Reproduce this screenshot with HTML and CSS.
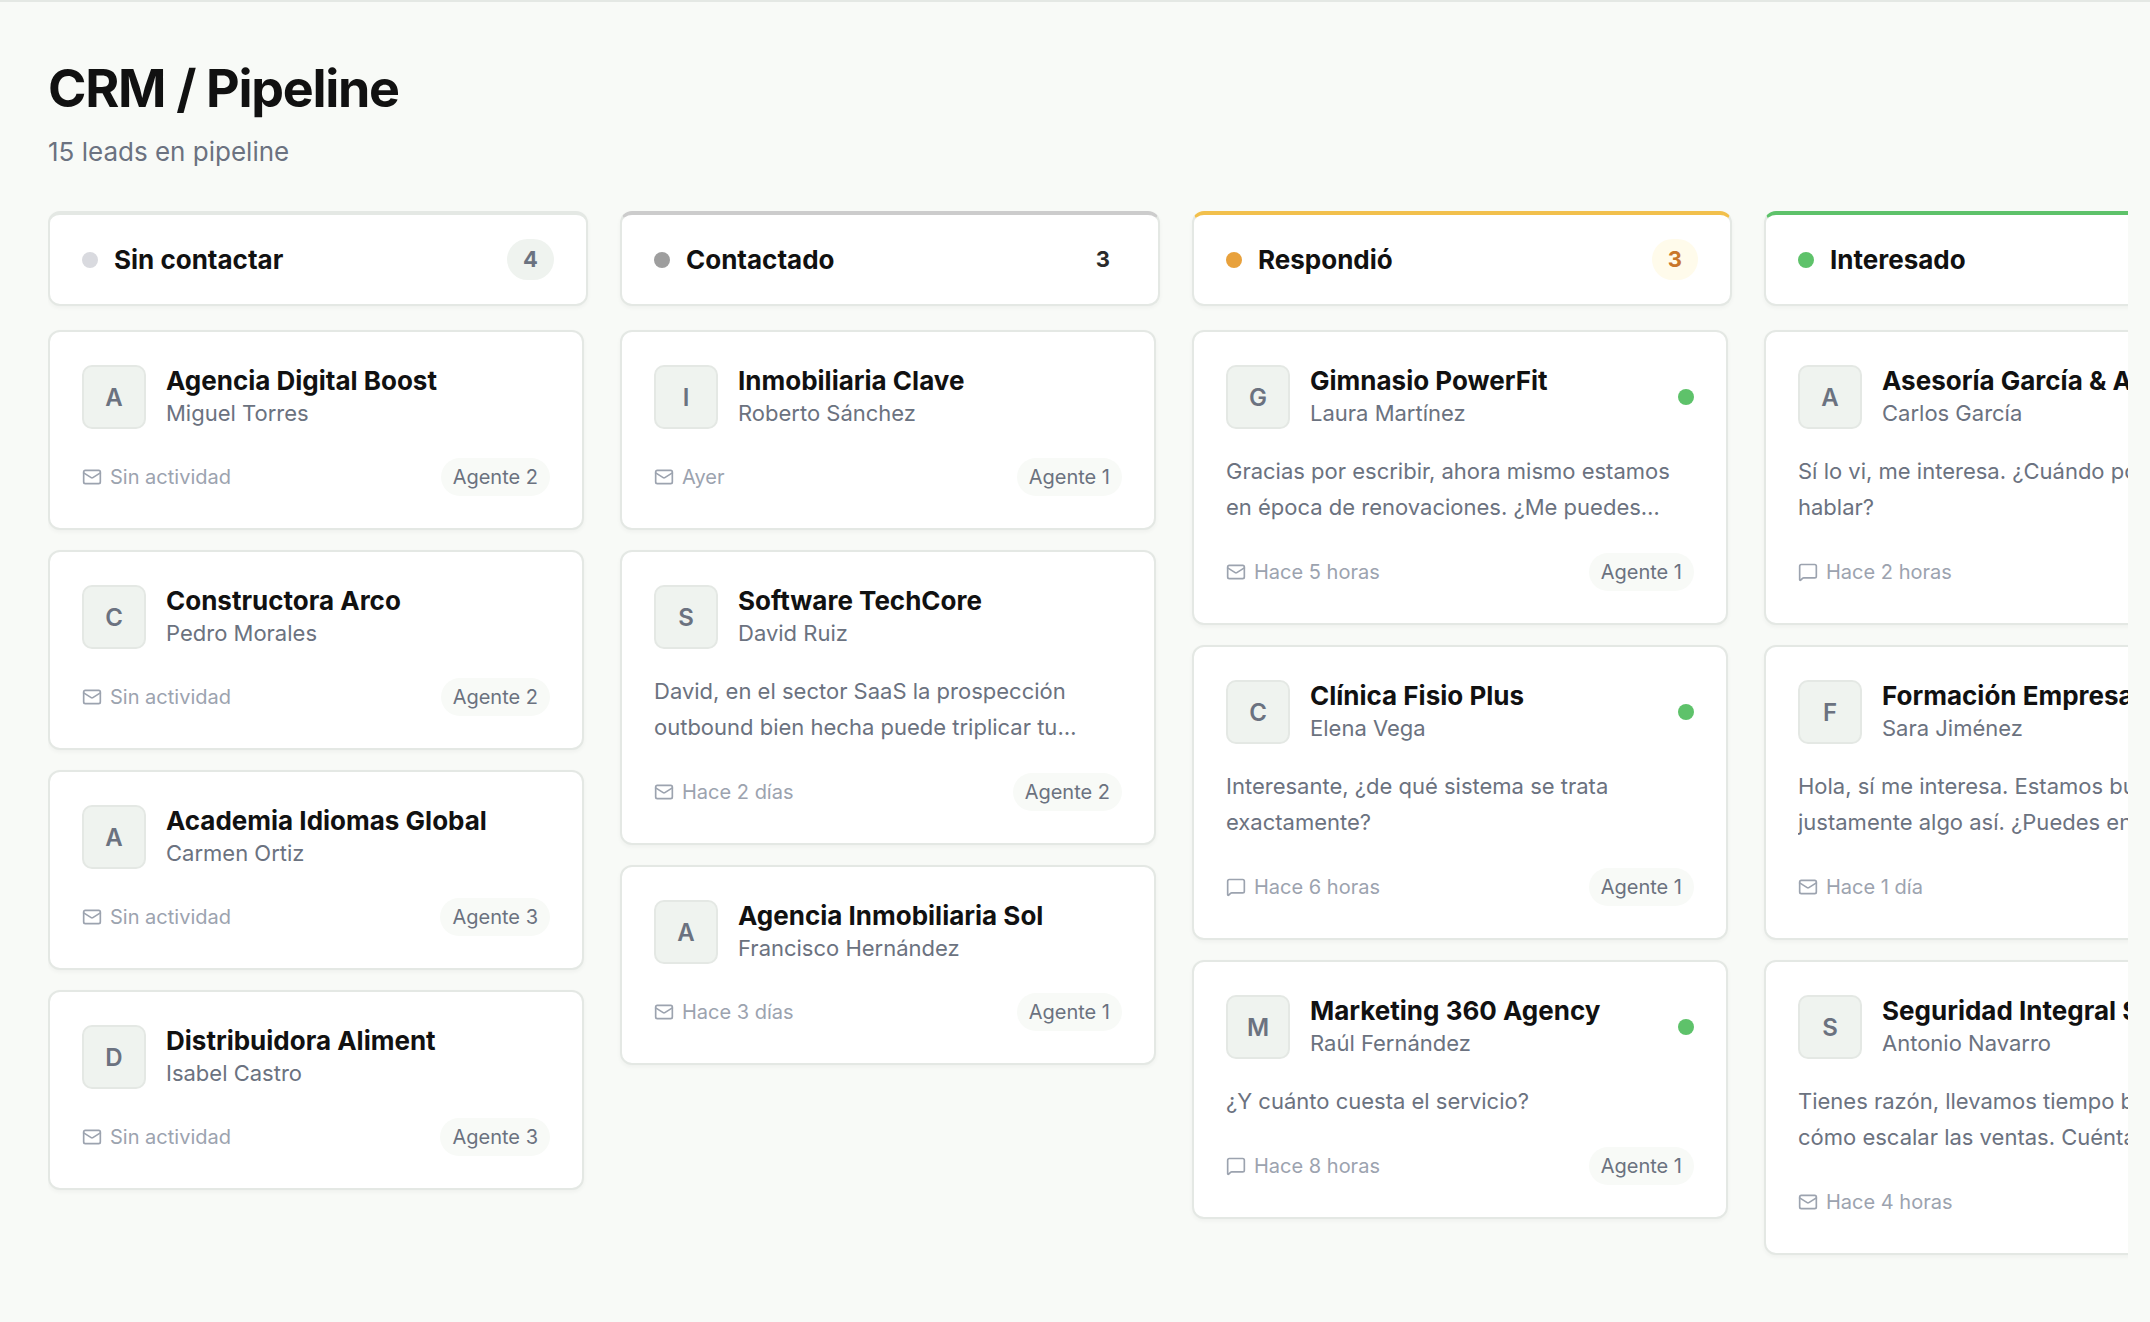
FILE: index.html
```html
<!DOCTYPE html>
<html lang="es">
  <head>
    <meta charset="UTF-8" />
    <meta name="viewport" content="width=device-width, initial-scale=1.0" />
    <title>CRM / Pipeline</title>
    <link rel="stylesheet" href="styles.css">
  </head>
  <body>
    <main class="page">
      <header class="page-header">
        <h1>CRM / Pipeline</h1>
        <p>15 leads en pipeline</p>
      </header>
      <div class="board" id="board"></div>
    </main>

    <script>
      const icons = {
        mail: `<svg class="icon" viewBox="0 0 24 24" aria-hidden="true">
            <rect x="2" y="4" width="20" height="16" rx="2" />
            <path d="m22 7-8.991 5.727a2 2 0 0 1-2.009 0L2 7" />
          </svg>`,
        chat: `<svg class="icon" viewBox="0 0 24 24" aria-hidden="true">
            <path d="M22 17a2 2 0 0 1-2 2H6.828a2 2 0 0 0-1.414.586l-2.202 2.202A.71.71 0 0 1 2 21.286V5a2 2 0 0 1 2-2h16a2 2 0 0 1 2 2z" />
          </svg>`,
      };

      const columns = [
        {
          id: "new",
          title: "Sin contactar",
          count: 4,
          leads: [
            { company: "Agencia Digital Boost", contact: "Miguel Torres", icon: "mail", time: "Sin actividad", agent: "Agente 2" },
            { company: "Constructora Arco", contact: "Pedro Morales", icon: "mail", time: "Sin actividad", agent: "Agente 2" },
            { company: "Academia Idiomas Global", contact: "Carmen Ortiz", icon: "mail", time: "Sin actividad", agent: "Agente 3" },
            { company: "Distribuidora Aliment", contact: "Isabel Castro", icon: "mail", time: "Sin actividad", agent: "Agente 3" },
          ],
        },
        {
          id: "contacted",
          title: "Contactado",
          count: 3,
          leads: [
            { company: "Inmobiliaria Clave", contact: "Roberto Sánchez", icon: "mail", time: "Ayer", agent: "Agente 1" },
            { company: "Software TechCore", contact: "David Ruiz", message: "David, en el sector SaaS la prospección outbound bien hecha puede triplicar tu facturación este año.", icon: "mail", time: "Hace 2 días", agent: "Agente 2" },
            { company: "Agencia Inmobiliaria Sol", contact: "Francisco Hernández", icon: "mail", time: "Hace 3 días", agent: "Agente 1" },
          ],
        },
        {
          id: "replied",
          title: "Respondió",
          count: 3,
          leads: [
            { company: "Gimnasio PowerFit", contact: "Laura Martínez", unread: true, message: "Gracias por escribir, ahora mismo estamos en época de renovaciones. ¿Me puedes contactar más adelante?", icon: "mail", time: "Hace 5 horas", agent: "Agente 1" },
            { company: "Clínica Fisio Plus", contact: "Elena Vega", unread: true, message: "Interesante, ¿de qué sistema se trata exactamente?", icon: "chat", time: "Hace 6 horas", agent: "Agente 1" },
            { company: "Marketing 360 Agency", contact: "Raúl Fernández", unread: true, message: "¿Y cuánto cuesta el servicio?", icon: "chat", time: "Hace 8 horas", agent: "Agente 1" },
          ],
        },
        {
          id: "interested",
          title: "Interesado",
          count: 3,
          leads: [
            { company: "Asesoría García &amp; Asociados", contact: "Carlos García", unread: true, message: "Sí lo vi, me interesa. ¿Cuándo podemos hablar?", icon: "chat", time: "Hace 2 horas", agent: "Agente 1" },
            { company: "Formación Empresarial", contact: "Sara Jiménez", unread: true, message: "Hola, sí me interesa. Estamos buscando justamente algo así. ¿Puedes enviarme información?", icon: "mail", time: "Hace 1 día", agent: "Agente 2" },
            { company: "Seguridad Integral Sur", contact: "Antonio Navarro", unread: true, message: "Tienes razón, llevamos tiempo buscando cómo escalar las ventas. Cuéntame más detalles.", icon: "mail", time: "Hace 4 horas", agent: "Agente 3" },
          ],
        },
      ];

      function renderCard(lead) {
        return `<article class="card">
            <div class="card-head">
              <span class="avatar">${lead.company[0]}</span>
              <div class="card-names">
                <h3>${lead.company}</h3>
                <p>${lead.contact}</p>
              </div>
              ${lead.unread ? `<span class="dot unread"></span>` : ""}
            </div>
            ${lead.message ? `<p class="message">${lead.message}</p>` : ""}
            <div class="card-foot">
              <span class="activity">${icons[lead.icon]}${lead.time}</span>
              <span class="agent">${lead.agent}</span>
            </div>
          </article>`;
      }

      document.getElementById("board").innerHTML = columns
        .map(
          (column) => `<section class="column ${column.id}">
            <div class="column-head">
              <span class="dot"></span>
              <h2>${column.title}</h2>
              <span class="count">${column.count}</span>
            </div>
            <div class="cards">${column.leads.map(renderCard).join("")}</div>
          </section>`
        )
        .join("");
    </script>
  </body>
</html>
```

FILE: styles.css
```css
* {
  box-sizing: border-box;
}
body {
  font-family: Inter, sans-serif;
  background: #f8faf7;
  color: #111;
  margin: 0;
}
h1,
h2,
h3,
p {
  margin: 0;
}
.page {
  min-height: 100vh;
  border-top: 2px solid #e4e8e4;
  padding: 48px 22px 48px 48px;
}
.page-header {
  margin-bottom: 40px;
}
.page-header h1 {
  font-size: 52px;
  line-height: 78px;
  font-weight: 700;
  letter-spacing: -0.025em;
}
.page-header p {
  margin-top: 4px;
  font-size: 26px;
  line-height: 39px;
  color: #6b7280;
}

/* board */
.board {
  display: flex;
  align-items: flex-start;
  gap: 32px;
  overflow-x: auto;
  scrollbar-width: none;
  padding-bottom: 16px;
}
.column {
  flex: 0 0 540px;
}
.column-head {
  display: flex;
  align-items: center;
  gap: 16px;
  padding: 24px 32px;
  background: #fff;
  border: 2px solid #e4e8e4;
  border-top-width: 4px;
  border-radius: 12px;
  box-shadow: 0 2px 4px rgba(0, 0, 0, 0.04);
}
.column-head h2 {
  flex: 1;
  font-size: 26px;
  line-height: 39px;
  font-weight: 700;
}
.dot {
  flex: none;
  width: 16px;
  height: 16px;
  border-radius: 50%;
  background: #d9dadf;
}
.count {
  padding: 4px 16px;
  border-radius: 999px;
  background: #eff3ef;
  color: #6b7280;
  font-size: 22px;
  line-height: 33px;
  font-weight: 700;
}
.contacted .column-head {
  border-top-color: #ccc;
}
.contacted .column-head .dot {
  background: #9e9e9e;
}
.contacted .count {
  background: none;
  color: #2b2b2b;
}
.replied .column-head {
  border-top-color: #f2c04c;
}
.replied .column-head .dot {
  background: #e8a13c;
}
.replied .count {
  background: #fffbeb;
  color: #c9772b;
}
.interested .column-head {
  border-top-color: #5ec26a;
}
.interested .column-head .dot,
.unread {
  background: #5ec26a;
}
.interested .count {
  background: #eefaf0;
  color: #3c9a48;
}

/* lead cards */
.cards {
  display: flex;
  flex-direction: column;
  gap: 20px;
  margin-top: 24px;
  padding-right: 4px;
}
.card {
  padding: 32px;
  background: #fff;
  border: 2px solid #e4e8e4;
  border-radius: 12px;
  box-shadow: 0 2px 4px rgba(0, 0, 0, 0.04);
}
.card-head {
  display: flex;
  align-items: center;
  gap: 20px;
}
.avatar {
  display: flex;
  align-items: center;
  justify-content: center;
  flex: none;
  width: 64px;
  height: 64px;
  background: #eff3ef;
  border: 2px solid #e4e8e4;
  border-radius: 10px;
  color: #6b7280;
  font-size: 24px;
  font-weight: 600;
}
.card-names {
  flex: 1;
  min-width: 0;
}
.card-names h3 {
  overflow: hidden;
  white-space: nowrap;
  text-overflow: ellipsis;
  font-size: 26px;
  line-height: 33px;
  font-weight: 700;
}
.card-names p {
  font-size: 22px;
  line-height: 33px;
  color: #6b7280;
}
.message {
  display: -webkit-box;
  -webkit-box-orient: vertical;
  -webkit-line-clamp: 2;
  overflow: hidden;
  margin-top: 23px;
  font-size: 22px;
  line-height: 36px;
  color: #6b7280;
}
.card-foot {
  display: flex;
  align-items: center;
  justify-content: space-between;
  margin-top: 28px;
}
.activity {
  display: flex;
  align-items: center;
  gap: 8px;
  font-size: 20px;
  line-height: 30px;
  color: #9ca3af;
}
.icon {
  width: 20px;
  height: 20px;
  fill: none;
  stroke: currentColor;
  stroke-width: 2;
  stroke-linecap: round;
  stroke-linejoin: round;
}
.agent {
  padding: 4px 12px;
  border-radius: 999px;
  background: #f8faf7;
  color: #6b7280;
  font-size: 20px;
  line-height: 30px;
}
```
